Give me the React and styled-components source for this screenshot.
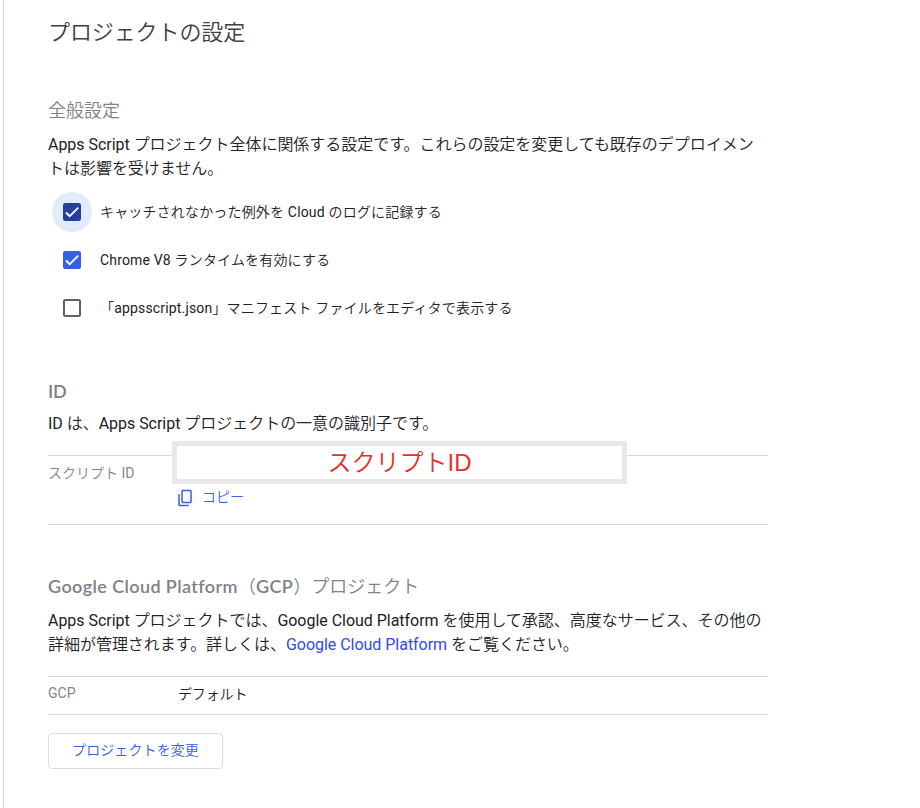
import React, { useState } from "react";
import styled, { createGlobalStyle } from "styled-components";

const App = () => {

    const [options, setOptions] = useState([
        { id: "log", label: "キャッチされなかった例外を Cloud のログに記録する", checked: true, focused: true },
        { id: "v8", label: "Chrome V8 ランタイムを有効にする", checked: true },
        { id: "manifest", label: "「appsscript.json」マニフェスト ファイルをエディタで表示する", checked: false },
    ])

    const toggle = (id) => {
        setOptions(options.map(o => o.id === id ? { ...o, checked: !o.checked } : o))
    }

    return (
        <>
            <GlobalStyle />
            <Page>
                <Title>プロジェクトの設定</Title>

                <Section $top={48}>
                    <Heading>全般設定</Heading>
                    <Text $top={12}>
                        Apps Script プロジェクト全体に関係する設定です。これらの設定を変更しても既存のデプロイメントは影響を受けません。
                    </Text>
                    <Options>
                        {options.map(o => (
                            <Option key={o.id} onClick={() => toggle(o.id)}>
                                <Halo $on={o.focused}>
                                    <Box $checked={o.checked} $focused={o.focused}>
                                        {o.checked && (
                                            <svg width="18" height="18" viewBox="0 0 24 24">
                                                <path d="M1.73,12.91 8.1,19.28 22.79,4.59" fill="none" stroke="#fff" strokeWidth="3.12" transform="translate(2.6 2.6) scale(.78)" />
                                            </svg>
                                        )}
                                    </Box>
                                </Halo>
                                <Label>{o.label}</Label>
                            </Option>
                        ))}
                    </Options>
                </Section>

                <Section $top={50}>
                    <Heading><Latin $spacing="-0.2px">ID</Latin></Heading>
                    <Text $top={10}>ID は、Apps Script プロジェクトの一意の識別子です。</Text>
                    <Row $height={68}>
                        <Name $top={7}>スクリプト ID</Name>
                        <Cell>
                            <IdMask>スクリプトID</IdMask>
                            <CopyButton>
                                <svg width="18" height="18" viewBox="0 0 24 24" fill="currentColor">
                                    <path d="M18 1H9C7.9 1 7 1.9 7 3v14c0 1.100.9 2 2 2h10c1.100 0 2-.9 2-2V3c0-1.100-.9-2-2-2zm1 16H9V3h10v14zM3 7v14c0 1.100.9 2 2 2h12v-2H5V7H3z" />
                                </svg>
                                <span>コピー</span>
                            </CopyButton>
                        </Cell>
                    </Row>
                </Section>

                <Section $top={48}>
                    <Heading><Latin>Google Cloud Platform</Latin>（<Latin>GCP</Latin>）プロジェクト</Heading>
                    <Text $top={12}>
                        Apps Script プロジェクトでは、Google Cloud Platform を使用して承認、高度なサービス、その他の詳細が管理されます。詳しくは、<Link href="#">Google Cloud Platform</Link> をご覧ください。
                    </Text>
                    <Row $height={37}>
                        <Name $top={6}>GCP</Name>
                        <Cell><Value>デフォルト</Value></Cell>
                    </Row>
                    <ChangeButton>プロジェクトを変更</ChangeButton>
                </Section>
            </Page>
        </>
    )
}

const GlobalStyle = createGlobalStyle`
    * {
        box-sizing: border-box;
    }
    body {
        margin: 0;
        background: #fff;
        color: #202124;
        font-family: Roboto, "Noto Sans CJK JP DemiLight", "Noto Sans CJK JP", sans-serif;
    }
`
const Page = styled.main`
    min-height: 808px;
    margin-left: 3px;
    padding: 17px 0 0 44px;
    border-left: 1px solid #dadce0;
`
const Title = styled.h1`
    margin: 0;
    font-size: 22px;
    line-height: 32px;
    font-weight: 350;
    letter-spacing: -0.1px;
    color: #3c4043;
`
const Section = styled.section`
    width: 720px;
    padding-top: ${props => props.$top}px;
`
const Heading = styled.h2`
    height: 24px;
    margin: 0;
    font-family: "Noto Sans CJK JP", sans-serif;
    font-size: 18px;
    line-height: 24px;
    font-weight: 350;
    color: #7d8189;
`
const Latin = styled.span`
    font-family: Lato, sans-serif;
    font-weight: 600;
    letter-spacing: ${props => props.$spacing || "0.4px"};
`
const Text = styled.p`
    margin: ${props => props.$top}px 0 0;
    font-size: 16px;
    line-height: 24px;
    letter-spacing: -0.03px;
`
const Options = styled.div`
    display: flex;
    flex-direction: column;
    gap: 8px;
    margin-top: 11px;
    padding-left: 4px;
`
const Option = styled.div`
    display: flex;
    align-items: center;
    gap: 8px;
    height: 40px;
    cursor: pointer;
`
const Halo = styled.span`
    display: flex;
    align-items: center;
    justify-content: center;
    width: 40px;
    height: 40px;
    border-radius: 50%;
    background: ${props => props.$on ? "#e2ebfa" : "transparent"};
`
const Box = styled.span`
    display: flex;
    align-items: center;
    justify-content: center;
    width: 18px;
    height: 18px;
    border-radius: 2px;
    border: ${props => props.$checked ? "none" : "2px solid #5f6368"};
    background: ${props => !props.$checked ? "transparent" : props.$focused ? "#263f9c" : "#355fe5"};
`
const Label = styled.span`
    font-size: 14px;
    line-height: 20px;
    letter-spacing: 0.17px;
`
const Row = styled.div`
    display: flex;
    height: ${props => props.$height + 2}px;
    margin-top: 19px;
    border-top: 1px solid #dadada;
    border-bottom: 1px solid #dadada;
`
const Name = styled.div`
    width: 130px;
    padding-top: ${props => props.$top}px;
    font-size: 14px;
    line-height: 20px;
    color: #80868b;
`
const Cell = styled.div`
    position: relative;
    flex: 1;
`
/* covers the real id, so it sits over the top rule of the row */
const IdMask = styled.div`
    position: absolute;
    top: -15px;
    left: -6px;
    width: 455px;
    height: 43px;
    border: 5px solid #e8e8e8;
    background: #fff;
    color: #e0322b;
    font-family: "Liberation Sans", "Noto Sans CJK JP DemiLight", "Noto Sans CJK JP", sans-serif;
    font-size: 24px;
    line-height: 33px;
    text-align: center;
`
const CopyButton = styled.button`
    display: flex;
    align-items: center;
    gap: 8px;
    margin-top: 31px;
    margin-left: -2px;
    padding: 0;
    border: 0;
    background: none;
    color: #355fe5;
    font-family: inherit;
    font-size: 14px;
    line-height: 20px;

    svg {
        margin-top: 1px;
    }
`
const Value = styled.div`
    padding-top: 7px;
    font-size: 14px;
    line-height: 20px;
    letter-spacing: -0.15px;
`
const Link = styled.a`
    color: #3347f5;
    text-decoration: none;
`
const ChangeButton = styled.button`
    display: block;
    width: 175px;
    height: 36px;
    margin-top: 18px;
    padding: 0 0 2px;
    border: 1px solid #dadce0;
    border-radius: 4px;
    background: #fff;
    color: #355fe5;
    font-family: inherit;
    font-size: 14px;
    line-height: 20px;
    letter-spacing: 0.1px;
`

export default App;
